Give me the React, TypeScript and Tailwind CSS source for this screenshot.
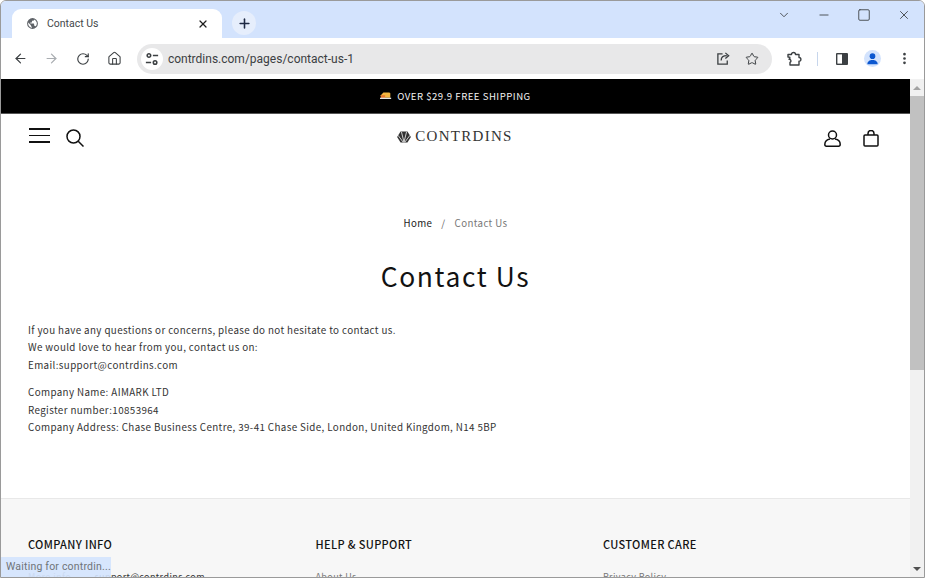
import { ArrowLeft, ArrowRight, RotateCw, Home, Star, ChevronDown, Minus, Square, X, Plus, EllipsisVertical } from 'lucide-react';

const bodyFont = 'font-["Noto_Sans_CJK_SC","Noto_Sans",sans-serif]';

function Globe() {
  return (
    <svg viewBox="0 0 24 24" className="w-[13px] h-[13px]" fill="#5f6368">
      <path d="M12 2a10 10 0 1 0 0 20 10 10 0 0 0 0-20Zm-1 17.900A8 8 0 0 1 4.200 10.200L9 15v1a2 2 0 0 0 2 2v1.900Zm6.900-2.500A2 2 0 0 0 16 16h-1v-3a1 1 0 0 0-1-1H8v-2h2a1 1 0 0 0 1-1V7h2a2 2 0 0 0 2-2v-.4a8 8 0 0 1 2.900 12.800Z" />
    </svg>
  );
}

function SiteControls() {
  return (
    <svg viewBox="0 0 16 16" className="w-[14px] h-[14px]" fill="none" stroke="#3c4043" strokeWidth="1.800">
      <circle cx="4.500" cy="4" r="2" />
      <path d="M9 4h6M1 12h6" />
      <circle cx="11.500" cy="12" r="2" />
    </svg>
  );
}

function Share() {
  return (
    <svg viewBox="0 0 16 16" className="w-[15px] h-[15px]" fill="none" stroke="#3c4043" strokeWidth="1.400">
      <path d="M7 3H2v11h10v-4" />
      <path d="M5.500 10c0-3.500 2.500-5 6-5M10 2l3.500 3L10 8" />
    </svg>
  );
}

function Puzzle() {
  return (
    <svg viewBox="0 0 16 16" className="w-[16px] h-[16px]" fill="none" stroke="#3c4043" strokeWidth="1.400" strokeLinejoin="round">
      <path d="M2 3.500h3.500a2 2 0 0 1 4 0H13v3a1.800 1.800 0 0 1 0 3.800V14H4v-2.600a1.700 1.700 0 0 0-1-3.200h.8V6.200L2 6Z" />
    </svg>
  );
}

function SidePanel() {
  return (
    <svg viewBox="0 0 14 14" className="w-[14px] h-[14px]">
      <rect x="1" y="1" width="12" height="12" rx="1" fill="#3c4043" />
      <rect x="2.400" y="2.400" width="4.600" height="9.200" fill="#fff" />
    </svg>
  );
}

function Avatar() {
  return (
    <div className="w-[17px] h-[17px] rounded-full bg-[#d3e3fd] flex items-center justify-center overflow-hidden">
      <svg viewBox="0 0 16 16" className="w-[15px] h-[15px]" fill="#0b57d0">
        <circle cx="8" cy="5.500" r="3" />
        <path d="M2.500 14c0-3 2.500-4.500 5.500-4.500s5.500 1.500 5.500 4.500Z" />
      </svg>
    </div>
  );
}

function LogoMark() {
  return (
    <svg viewBox="0 0 16 14" className="w-[14px] h-[12px]" fill="#333">
      <path d="M4 0.500h8l4 6.500-4 6.500H4L0 7Z" />
      <path d="M5 1l3 12M11 1 8 13M1 5l6 8M15 5l-6 8" stroke="#fff" strokeWidth="0.900" />
    </svg>
  );
}

function Truck() {
  return (
    <svg viewBox="0 0 14 10" className="w-[12px] h-[10px]">
      <path d="M4 1h7l1 1v5H1V4Z" fill="#f4b63f" />
      <path d="M1 4h5v3H1Z" fill="#e8762c" />
      <rect x="0" y="7" width="13" height="1.500" fill="#e6e6e6" />
    </svg>
  );
}

export default function App() {
  return (
    <div className={`w-[925px] h-[578px] overflow-hidden relative bg-white border border-[#9a9a9a] rounded-t-[6px] ${bodyFont}`}>
      {/* tab strip */}
      <div className="h-[37px] bg-[#d3e3fd] flex items-end pl-[11px] font-['Roboto',sans-serif]">
        <div className="w-[210px] h-[29px] bg-white rounded-t-[9px] flex items-center pl-[14px] pr-[13px] gap-[8px]">
          <Globe />
          <span className="text-[10.500px] text-[#44474a] flex-1">Contact Us</span>
          <X className="w-[12px] h-[12px] text-[#1f1f1f]" strokeWidth={2.5} />
        </div>
        <div className="ml-[10px] mb-[3px] w-[24px] h-[24px] rounded-full bg-[#e6eefc] flex items-center justify-center">
          <Plus className="w-[15px] h-[15px] text-[#1f2a44]" strokeWidth={2.5} />
        </div>
        <div className="flex-1 self-stretch flex justify-end items-start pt-[7px] pr-[13px] gap-[26px] text-[#3c4043]">
          <ChevronDown className="w-[14px] h-[14px]" strokeWidth={1.5} />
          <Minus className="w-[14px] h-[14px]" strokeWidth={1.5} />
          <Square className="w-[14px] h-[14px]" strokeWidth={1.5} />
          <X className="w-[14px] h-[14px]" strokeWidth={1.5} />
        </div>
      </div>

      {/* toolbar */}
      <div className="h-[41px] bg-white flex items-center pl-[12px] pr-[12px] font-['Roboto',sans-serif]">
        <ArrowLeft className="w-[15px] h-[15px] text-[#3c4043]" strokeWidth={2} />
        <ArrowRight className="w-[15px] h-[15px] text-[#a9adb1] ml-[16px]" strokeWidth={2} />
        <RotateCw className="w-[14px] h-[14px] text-[#3c4043] ml-[17px]" strokeWidth={2} />
        <Home className="w-[15px] h-[15px] text-[#3c4043] ml-[17px]" strokeWidth={1.7} />
        <div className="ml-[15px] w-[636px] h-[30px] bg-[#e8e8e9] rounded-full flex items-center pl-[4px] pr-[13px]">
          <div className="w-[22px] h-[22px] rounded-full bg-white flex items-center justify-center">
            <SiteControls />
          </div>
          <span className="ml-[5px] text-[12px] text-[#3c4043] flex-1">contrdins.com/pages/contact-us-1</span>
          <Share />
          <Star className="w-[14px] h-[14px] text-[#3c4043] ml-[14px]" strokeWidth={1.7} />
        </div>
        <div className="ml-[14px]"><Puzzle /></div>
        <div className="ml-[15px] w-px h-[14px] bg-[#c7d6ec]" />
        <div className="ml-[17px]"><SidePanel /></div>
        <div className="ml-[15px]"><Avatar /></div>
        <EllipsisVertical className="w-[15px] h-[15px] text-[#3c4043] ml-[16px]" strokeWidth={2.4} />
      </div>

      {/* page */}
      <div className="flex h-[498px]">
        <div className="w-[909px] shrink-0 overflow-hidden">
          <div className="h-[35px] bg-black flex items-center justify-center gap-[5px] border-b border-[#555]">
            <Truck />
            <span className="text-[9.600px] tracking-[0.5px] text-[#f2f2f2]">OVER $29.9 FREE SHIPPING</span>
          </div>

          <div className="h-[48px] flex items-center justify-between pl-[28px] pr-[31px]">
            <div className="flex items-center gap-[16px]">
              <div className="w-[21px] flex flex-col gap-[5px] mb-[5px]">
                <div className="h-[1.500px] bg-[#111]" />
                <div className="h-[1.500px] bg-[#111]" />
                <div className="h-[1.500px] bg-[#111]" />
              </div>
              <svg viewBox="0 0 18 18" className="w-[18px] h-[18px] mb-[1px]" fill="none" stroke="#111" strokeWidth="1.500">
                <circle cx="7.500" cy="7.500" r="6.500" />
                <path d="M12.200 12.200 17.500 17.500" />
              </svg>
            </div>
            <div className="flex items-center gap-[4px] mb-[3px] ml-[2px]">
              <LogoMark />
              <span className="font-['Liberation_Serif',serif] text-[15px] tracking-[1.300px] text-[#333]">CONTRDINS</span>
            </div>
            <div className="flex items-center gap-[22px]">
              <svg viewBox="0 0 17 17" className="w-[17px] h-[17px]" fill="none" stroke="#111" strokeWidth="1.500">
                <circle cx="8.500" cy="5" r="4" />
                <path d="M6 9c-3 .5-5 2-5.200 5.200 0 1.300.7 2 1.700 2h12c1 0 1.700-.7 1.700-2C16.200 11 14 9.500 11 9" />
              </svg>
              <svg viewBox="0 0 16 17" className="w-[16px] h-[17px]" fill="none" stroke="#111" strokeWidth="1.500">
                <rect x="1" y="5" width="14" height="11" rx="1" />
                <path d="M5 5V3.500a3 3 0 0 1 6 0V5" />
              </svg>
            </div>
          </div>

          <main className="pt-[51px] px-[27px]">
            <div className="flex justify-center items-center text-[9.700px] tracking-[0.4px] h-[20px]">
              <span className="text-[#222]">Home</span>
              <span className="mx-[9px] text-[#666]">/</span>
              <span className="text-[#777]">Contact Us</span>
            </div>
            <h1 className="text-center text-[26.400px] font-normal tracking-[1.600px] text-[#121212] leading-[40px] mt-[23px]">Contact Us</h1>
            <div className="mt-[26px] text-[9.800px] leading-[17.400px] tracking-[0.38px] text-[#333]">
              <p>If you have any questions or concerns, please do not hesitate to contact us.</p>
              <p>We would love to hear from you, contact us on:</p>
              <p>Email:support@contrdins.com</p>
              <p className="mt-[10px]">Company Name: AIMARK LTD</p>
              <p>Register number:10853964</p>
              <p>Company Address: Chase Business Centre, 39-41 Chase Side, London, United Kingdom, N14 5BP</p>
            </div>
          </main>

          <footer className="mt-[62px] bg-[#f7f7f7] border-t border-[#e8e8e8] h-[120px] pt-[36px] pl-[27px] grid grid-cols-[287.500px_287.500px_1fr]">
            <div>
              <h3 className="text-[11px] font-medium tracking-[0.35px] text-[#121212] leading-[18px]">COMPANY INFO</h3>
              <p className="mt-[17px] text-[9px] tracking-[0.4px] text-[#777] leading-[14px]">More info <span className="ml-[21px] text-[#333]">support@contrdins.com</span></p>
            </div>
            <div>
              <h3 className="text-[11px] font-medium tracking-[0.35px] text-[#121212] leading-[18px]">HELP &amp; SUPPORT</h3>
              <p className="mt-[17px] text-[9px] tracking-[0.4px] text-[#777] leading-[14px]">About Us</p>
            </div>
            <div>
              <h3 className="text-[11px] font-medium tracking-[0.35px] text-[#121212] leading-[18px]">CUSTOMER CARE</h3>
              <p className="mt-[17px] text-[9px] tracking-[0.4px] text-[#777] leading-[14px]">Privacy Policy</p>
            </div>
          </footer>
        </div>

        {/* scrollbar */}
        <div className="w-[14px] shrink-0 bg-[#f1f1f1] flex flex-col items-center">
          <div className="h-[17px] flex items-center justify-center">
            <div className="w-0 h-0 border-x-[4px] border-x-transparent border-b-[4px] border-b-[#a3a3a3]" />
          </div>
          <div className="w-full h-[274px] bg-[#c1c1c1]" />
          <div className="flex-1" />
          <div className="h-[17px] flex items-center justify-center">
            <div className="w-0 h-0 border-x-[4px] border-x-transparent border-t-[4px] border-t-[#505050]" />
          </div>
        </div>
      </div>

      {/* status bubble */}
      <div className="absolute left-0 bottom-0 w-[110px] h-[20px] bg-[#d3e3fd]/90 flex items-center pl-[5px] text-[10.500px] tracking-[0.2px] text-[#6f7478] font-['Roboto',sans-serif] whitespace-nowrap overflow-hidden">
        Waiting for contrdin...
      </div>
    </div>
  );
}
